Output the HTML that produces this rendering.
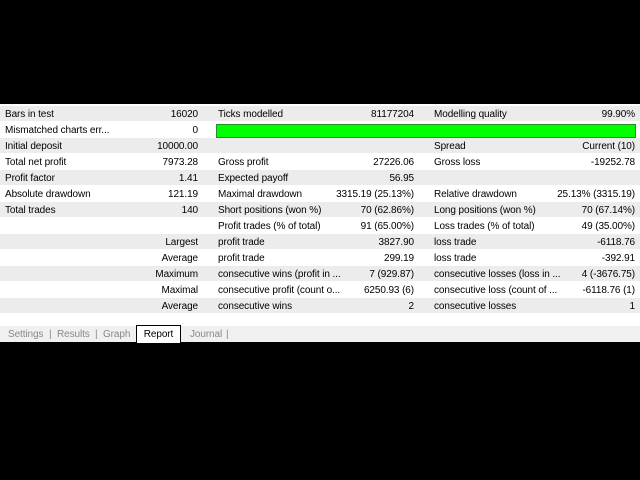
<html><head><style>
body{margin:0;background:#000;width:640px;height:480px;position:relative;font-family:"Liberation Sans",sans-serif;font-size:10px;letter-spacing:-0.1px;color:#000;overflow:hidden}
#p{position:absolute;left:0;top:104px;width:640px;height:222px;background:#fff}
.r{position:absolute;left:0;width:640px;height:15px;line-height:17px}
.g{background:#ececec}
.r span{position:absolute;white-space:nowrap}
.l1{left:5px}.v1{right:442px;text-align:right}
.l2{left:218px}.v2{right:226px;text-align:right}
.l3{left:434px}.v3{right:5px;text-align:right}
.rl{right:442px}
#tabs{position:absolute;left:0;top:326px;width:640px;height:16px;background:#f0f0f0;line-height:17px;color:#888}
#tabs span{position:absolute}
#rep{position:absolute;left:136px;top:325px;width:43px;height:17px;background:#fff;border-left:1px solid #000;border-right:1px solid #000;border-top:1px solid #000;color:#000;line-height:18px;text-align:center}
</style></head><body>
<div id="p">
<div class="r g" style="top:2px"><span class="l1">Bars in test</span><span class="v1">16020</span><span class="l2">Ticks modelled</span><span class="v2">81177204</span><span class="l3">Modelling quality</span><span class="v3">99.90%</span></div>
<div class="r" style="top:18px"><span class="l1">Mismatched charts err...</span><span class="v1">0</span><div style="position:absolute;left:216px;top:2px;width:418px;height:12px;background:#00ff00;border:1px solid #2a8a2a"></div></div>
<div class="r g" style="top:34px"><span class="l1">Initial deposit</span><span class="v1">10000.00</span><span class="l3">Spread</span><span class="v3">Current (10)</span></div>
<div class="r" style="top:50px"><span class="l1">Total net profit</span><span class="v1">7973.28</span><span class="l2">Gross profit</span><span class="v2">27226.06</span><span class="l3">Gross loss</span><span class="v3">-19252.78</span></div>
<div class="r g" style="top:66px"><span class="l1">Profit factor</span><span class="v1">1.41</span><span class="l2">Expected payoff</span><span class="v2">56.95</span></div>
<div class="r" style="top:82px"><span class="l1">Absolute drawdown</span><span class="v1">121.19</span><span class="l2">Maximal drawdown</span><span class="v2">3315.19 (25.13%)</span><span class="l3">Relative drawdown</span><span class="v3">25.13% (3315.19)</span></div>
<div class="r g" style="top:98px"><span class="l1">Total trades</span><span class="v1">140</span><span class="l2">Short positions (won %)</span><span class="v2">70 (62.86%)</span><span class="l3">Long positions (won %)</span><span class="v3">70 (67.14%)</span></div>
<div class="r" style="top:114px"><span class="l2">Profit trades (% of total)</span><span class="v2">91 (65.00%)</span><span class="l3">Loss trades (% of total)</span><span class="v3">49 (35.00%)</span></div>
<div class="r g" style="top:130px"><span class="rl">Largest</span><span class="l2">profit trade</span><span class="v2">3827.90</span><span class="l3">loss trade</span><span class="v3">-6118.76</span></div>
<div class="r" style="top:146px"><span class="rl">Average</span><span class="l2">profit trade</span><span class="v2">299.19</span><span class="l3">loss trade</span><span class="v3">-392.91</span></div>
<div class="r g" style="top:162px"><span class="rl">Maximum</span><span class="l2">consecutive wins (profit in ...</span><span class="v2">7 (929.87)</span><span class="l3">consecutive losses (loss in ...</span><span class="v3">4 (-3676.75)</span></div>
<div class="r" style="top:178px"><span class="rl">Maximal</span><span class="l2">consecutive profit (count o...</span><span class="v2">6250.93 (6)</span><span class="l3">consecutive loss (count of ...</span><span class="v3">-6118.76 (1)</span></div>
<div class="r g" style="top:194px"><span class="rl">Average</span><span class="l2">consecutive wins</span><span class="v2">2</span><span class="l3">consecutive losses</span><span class="v3">1</span></div>
</div>
<div id="tabs"><span style="left:8px">Settings</span><span style="left:49px">|</span><span style="left:57px">Results</span><span style="left:95px">|</span><span style="left:103px">Graph</span><span style="left:190px">Journal</span><span style="left:226px">|</span></div>
<div id="rep">Report</div>
</body></html>
